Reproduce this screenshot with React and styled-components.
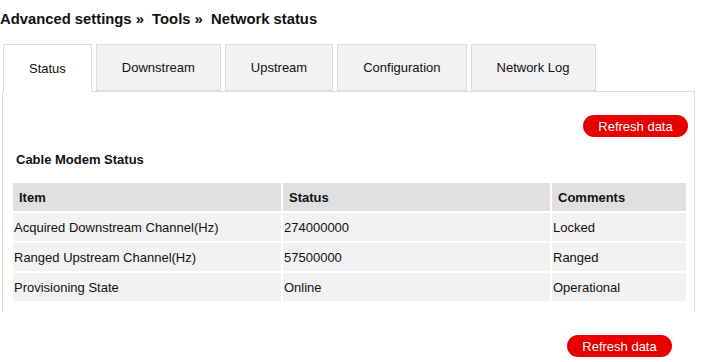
import React from 'react';
import styled, { createGlobalStyle } from 'styled-components';

const GlobalStyle = createGlobalStyle`
    body {
        margin: 0;
        background: #fff;
        font-family: "Liberation Sans", Arial, sans-serif;
        color: #111;
    }
`;

const Page = styled.div`
    width: 718px;
    height: 362px;
    overflow: hidden;
`;

const Breadcrumb = styled.h1`
    margin: 0;
    padding: 10px 0 0 0;
    height: 34px;
    box-sizing: border-box;
    font-size: 14.8px;
    line-height: 18px;
    font-weight: bold;
    color: #111;
    white-space: pre;
`;

const TabBar = styled.div`
    display: flex;
    gap: 4px;
    padding: 10px 0 0 3px;
    position: relative;
    z-index: 1;
`;

const Tab = styled.div`
    height: ${(p) => (p.$active ? '48px' : '47px')};
    box-sizing: border-box;
    padding: 0 25px;
    display: flex;
    align-items: center;
    justify-content: center;
    font-size: 13px;
    color: #111;
    border: 1px solid #dcdcdc;
    border-bottom: ${(p) => (p.$active ? 'none' : '1px solid #dcdcdc')};
    background: ${(p) => (p.$active ? '#fff' : '#f2f2f2')};
    padding-bottom: ${(p) => (p.$active ? '1px' : '0')};
`;

const Panel = styled.div`
    margin: -1px 0 0 2px;
    width: 693px;
    height: 221px;
    box-sizing: border-box;
    border: 1px solid #dcdcdc;
    border-bottom: none;
    padding: 23px 6px 0 8px;
`;

const ButtonRow = styled.div`
    display: flex;
    justify-content: flex-end;
    padding-right: ${(p) => p.$right || 0}px;
    margin-top: ${(p) => p.$top || 0}px;
`;

const RefreshButton = styled.button`
    width: 105px;
    height: 22px;
    border: none;
    border-radius: 11px;
    background: #e60000;
    color: #fff;
    font-family: "Liberation Sans", Arial, sans-serif;
    font-size: 13px;
    padding: 0;
    cursor: pointer;
`;

const SectionTitle = styled.h2`
    margin: 15px 0 0 5px;
    font-size: 13px;
    line-height: 16px;
    font-weight: bold;
    color: #111;
`;

const Table = styled.table`
    margin-top: 13px;
    border-spacing: 2px;
    border-collapse: separate;
    width: 677px;
    font-size: 13px;
    table-layout: fixed;
`;

const HeadCell = styled.th`
    height: 28px;
    padding: 0 6px;
    background: #e0e0e0;
    text-align: left;
    font-weight: bold;
    color: #111;
    width: ${(p) => p.$w}px;
    box-sizing: border-box;
`;

const Cell = styled.td`
    height: 28px;
    padding: 0 1px;
    background: #f2f2f2;
    color: #111;
`;

const tabs = ['Status', 'Downstream', 'Upstream', 'Configuration', 'Network Log'];

const rows = [
    ['Acquired Downstream Channel(Hz)', '274000000', 'Locked'],
    ['Ranged Upstream Channel(Hz)', '57500000', 'Ranged'],
    ['Provisioning State', 'Online', 'Operational'],
];

const App = () => {
    return (
        <Page>
            <GlobalStyle />
            <Breadcrumb>{'Advanced settings »  Tools »  Network status'}</Breadcrumb>
            <TabBar>
                {tabs.map((t, i) => (
                    <Tab key={t} $active={i === 0}>{t}</Tab>
                ))}
            </TabBar>
            <Panel>
                <ButtonRow>
                    <RefreshButton>Refresh data</RefreshButton>
                </ButtonRow>
                <SectionTitle>Cable Modem Status</SectionTitle>
                <Table>
                    <thead>
                        <tr>
                            <HeadCell $w={268}>Item</HeadCell>
                            <HeadCell $w={267}>Status</HeadCell>
                            <HeadCell $w={134}>Comments</HeadCell>
                        </tr>
                    </thead>
                    <tbody>
                        {rows.map((r) => (
                            <tr key={r[0]}>
                                {r.map((c) => (
                                    <Cell key={c}>{c}</Cell>
                                ))}
                            </tr>
                        ))}
                    </tbody>
                </Table>
            </Panel>
            <ButtonRow $right={46} $top={23}>
                <RefreshButton>Refresh data</RefreshButton>
            </ButtonRow>
        </Page>
    );
};

export default App;
